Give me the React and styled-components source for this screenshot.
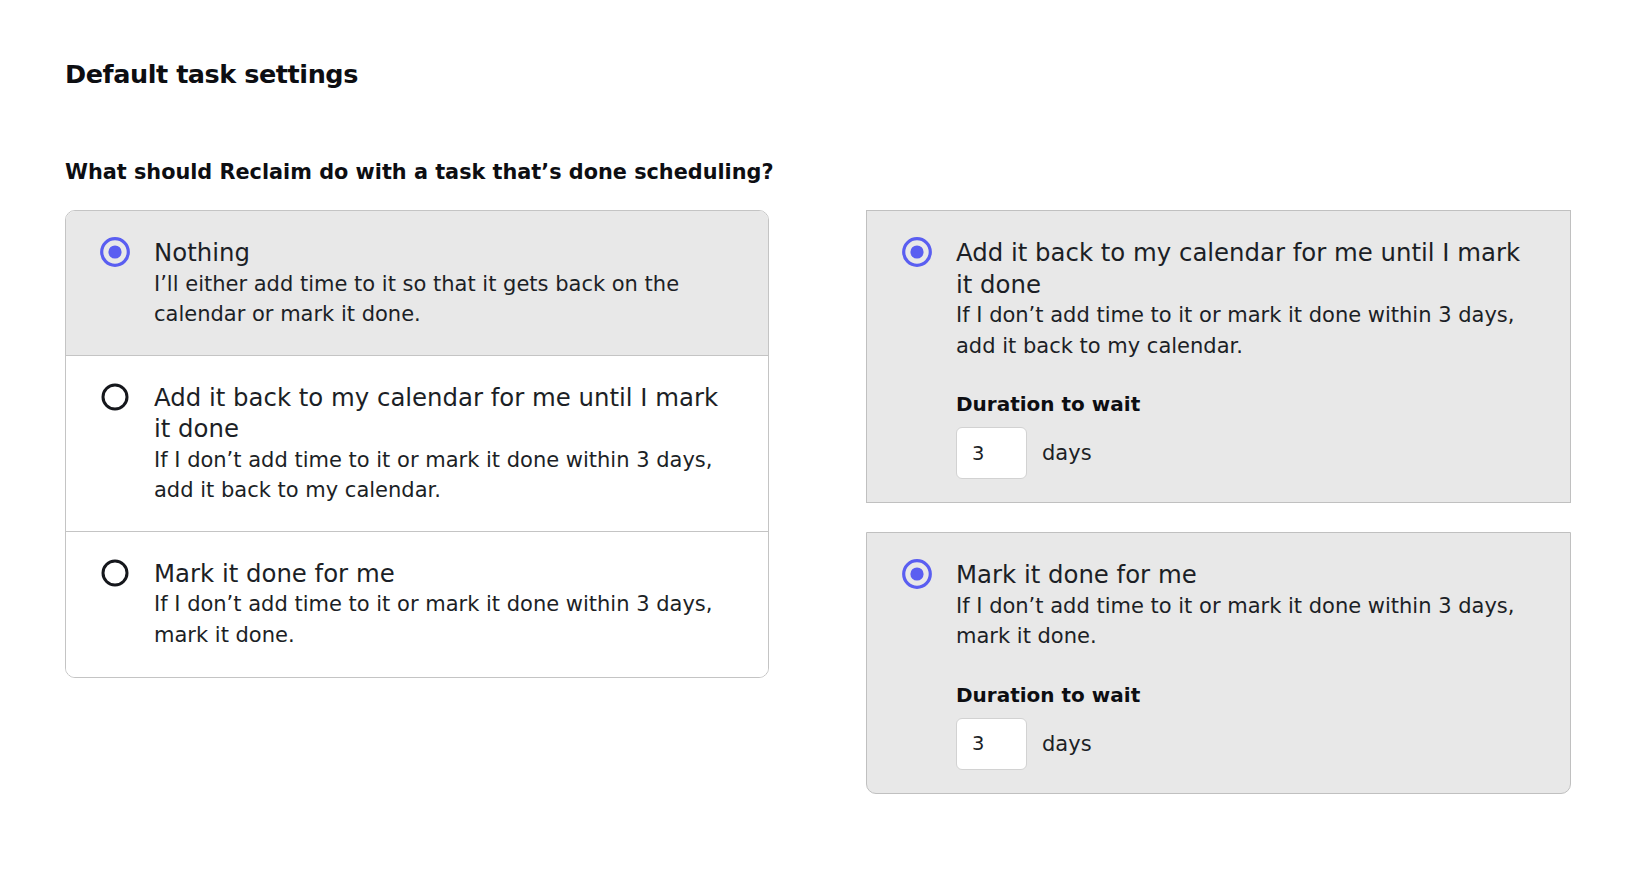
import React, { useState } from "react";
import styled, { createGlobalStyle } from "styled-components";

const Global = createGlobalStyle`
  html, body { margin: 0; padding: 0; background: #ffffff; }
  body { font-family: "DejaVu Sans", "Noto Sans", sans-serif; color: #1c1f26; }
  * { box-sizing: border-box; }
`;

const Page = styled.div`
  padding: 56px 0 0 65px;
  width: 1640px;
  min-height: 887px;
`;

const Heading = styled.h1`
  margin: 0;
  font-size: 25.5px;
  line-height: 36px;
  font-weight: 700;
  letter-spacing: -0.45px;
  color: #0d0e12;
`;

const Question = styled.h2`
  margin: 65px 0 0;
  font-size: 20.8px;
  line-height: 30px;
  font-weight: 700;
  color: #0d0e12;
`;

const Columns = styled.div`
  display: grid;
  grid-template-columns: 704px 705px;
  column-gap: 97px;
  align-items: start;
  margin-top: 23px;
`;

const List = styled.div`
  border: 1px solid #c4c4c4;
  border-radius: 10px;
  overflow: hidden;
`;

const Row = styled.label`
  display: flex;
  align-items: flex-start;
  gap: 24px;
  padding: 26px 34px 25px 34px;
  background: ${(p) => (p.$selected ? "#e8e8e8" : "#ffffff")};
  cursor: pointer;
  & + & { border-top: 1px solid #c4c4c4; }
  &:last-child { padding-bottom: 27px; }
`;

const Stack = styled.div`
  display: flex;
  flex-direction: column;
  gap: 29px;
`;

const Card = styled.div`
  display: flex;
  align-items: flex-start;
  gap: 24px;
  padding: 26px 35px 23px 35px;
  background: #e8e8e8;
  border: 1px solid #c0c0c0;
  border-radius: ${(p) => (p.$last ? "0 0 10px 10px" : "0")};
`;

const RadioBox = styled.span`
  flex: none;
  width: 30px;
  height: 30px;
  display: flex;
  align-items: center;
  justify-content: center;
`;

const Body = styled.div`
  flex: 1;
  min-width: 0;
`;

const Title = styled.div`
  font-size: 24.4px;
  line-height: 31.5px;
  font-weight: 400;
  color: #1c1f26;
`;

const Desc = styled.div`
  font-size: 21px;
  line-height: 30.5px;
  font-weight: 400;
  color: #1c1f26;
`;

const FieldLabel = styled.div`
  margin-top: 28px;
  font-size: 20px;
  line-height: 30px;
  font-weight: 700;
  color: #0d0e12;
`;

const FieldRow = styled.div`
  display: flex;
  align-items: center;
  gap: 15px;
  margin-top: 8px;
`;

const NumberBox = styled.div`
  width: 71px;
  height: 52px;
  background: #ffffff;
  border: 1px solid #d2d2d2;
  border-radius: 6px;
  padding-left: 15px;
  display: flex;
  align-items: center;
  font-size: 19.5px;
  color: #1c1f26;
`;

const Unit = styled.span`
  font-size: 21px;
  color: #1c1f26;
`;

function Radio({ checked }) {
  return (
    <RadioBox>
      <svg width="30" height="30" viewBox="0 0 30 30">
        {checked ? (
          <>
            <circle cx="15" cy="15" r="13.3" fill="none" stroke="#5a5ef1" strokeWidth="3.2" />
            <circle cx="15" cy="15" r="6.6" fill="#5a5ef1" />
          </>
        ) : (
          <circle cx="15" cy="15" r="12" fill="none" stroke="#15171c" strokeWidth="3" />
        )}
      </svg>
    </RadioBox>
  );
}

const options = [
  {
    id: "nothing",
    title: "Nothing",
    desc: "I’ll either add time to it so that it gets back on the calendar or mark it done.",
  },
  {
    id: "addback",
    title: "Add it back to my calendar for me until I mark it done",
    desc: "If I don’t add time to it or mark it done within 3 days, add it back to my calendar.",
  },
  {
    id: "markdone",
    title: "Mark it done for me",
    desc: "If I don’t add time to it or mark it done within 3 days, mark it done.",
  },
];

export default function App() {
  const [selected, setSelected] = useState("nothing");
  return (
    <Page>
      <Global />
      <Heading>Default task settings</Heading>
      <Question>What should Reclaim do with a task that’s done scheduling?</Question>
      <Columns>
        <List>
          {options.map((o) => (
            <Row key={o.id} $selected={selected === o.id} onClick={() => setSelected(o.id)}>
              <Radio checked={selected === o.id} />
              <Body>
                <Title>{o.title}</Title>
                <Desc>{o.desc}</Desc>
              </Body>
            </Row>
          ))}
        </List>
        <Stack>
          {options.slice(1).map((o, i) => (
            <Card key={o.id} $last={i === 1}>
              <Radio checked />
              <Body>
                <Title>{o.title}</Title>
                <Desc>{o.desc}</Desc>
                <FieldLabel>Duration to wait</FieldLabel>
                <FieldRow>
                  <NumberBox>3</NumberBox>
                  <Unit>days</Unit>
                </FieldRow>
              </Body>
            </Card>
          ))}
        </Stack>
      </Columns>
    </Page>
  );
}
